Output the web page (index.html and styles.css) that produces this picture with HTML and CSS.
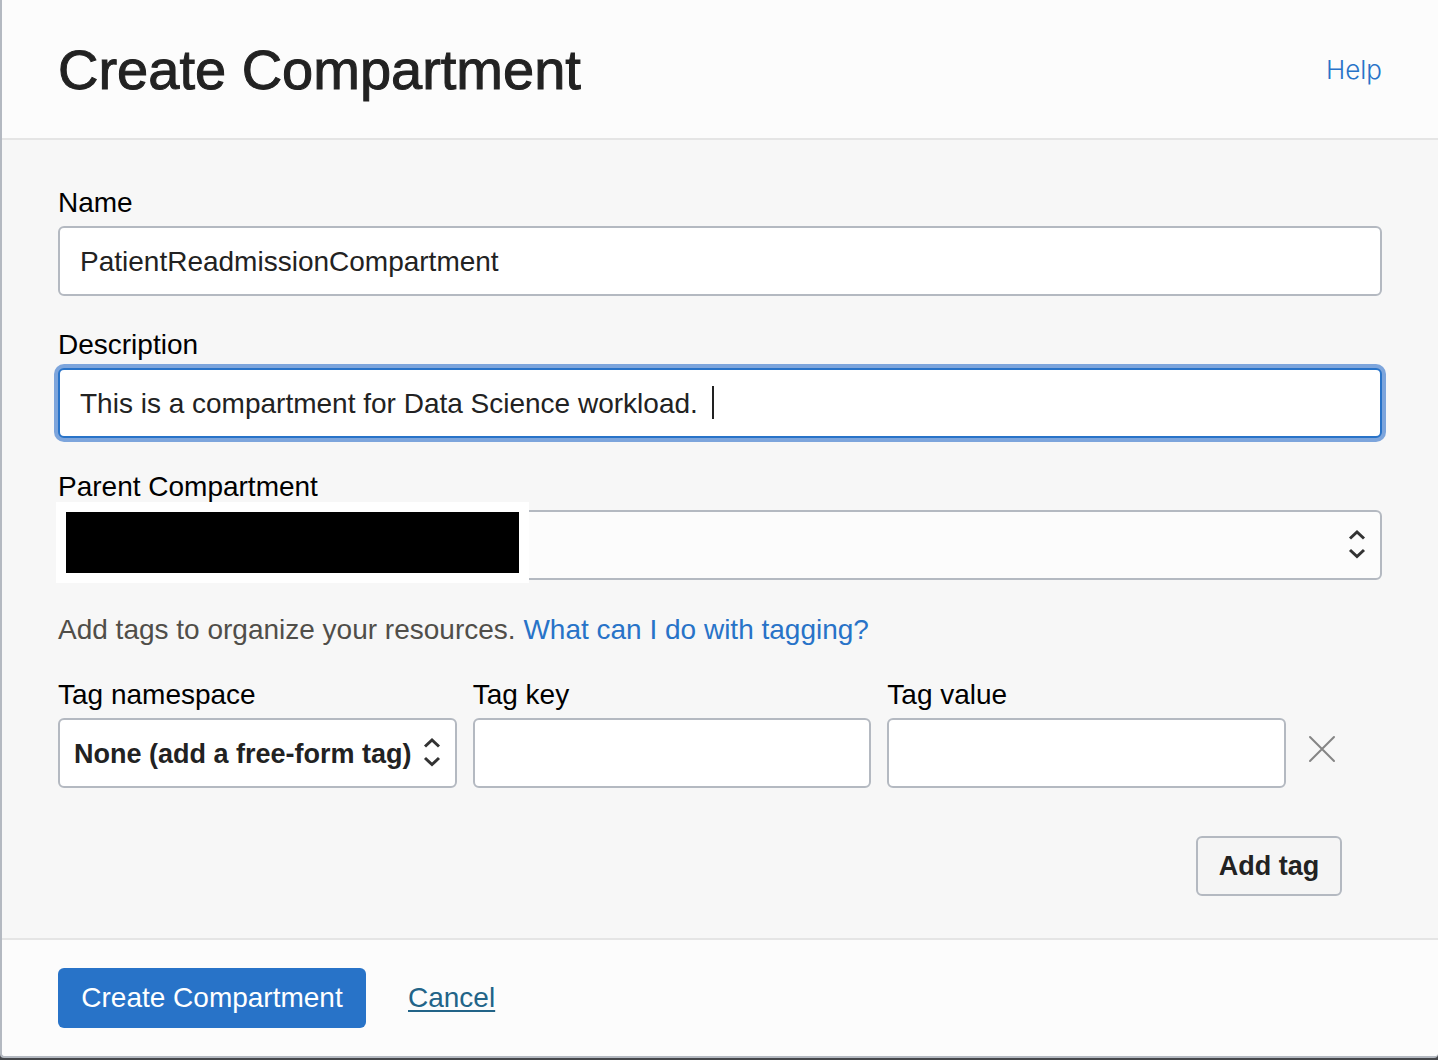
FILE: index.html
```html
<!DOCTYPE html>
<html lang="en">
<head>
<meta charset="utf-8">
<meta name="viewport" content="width=device-width, initial-scale=1">
<title>Create Compartment</title>
<link rel="stylesheet" href="styles.css">
</head>
<body>
<form class="dialog">
  <header class="dialog-header">
    <h1 class="title">Create Compartment</h1>
    <a class="help" href="#help">Help</a>
  </header>

  <main class="dialog-body">
    <div class="field">
      <label for="name">Name</label>
      <input class="control" id="name" type="text" value="PatientReadmissionCompartment">
    </div>
    <div class="field">
      <label for="description">Description</label>
      <div class="control-wrap">
        <input class="control control-active" id="description" type="text" value="This is a compartment for Data Science workload. ">
        <span class="caret"></span>
      </div>
    </div>
    <div class="field">
      <label for="parent">Parent Compartment</label>
      <div class="control-wrap">
        <select class="control control-muted" id="parent"><option value=""></option></select>
        <svg class="arrows" viewBox="0 0 20 32" aria-hidden="true"><path d="M3 10.5 10 4l7 6.500M3 22l7 6.500 7-6.500"/></svg>
        <span class="redaction"></span>
      </div>
    </div>

    <p class="hint">Add tags to organize your resources. <a class="hint-link" href="#tagging">What can I do with tagging?</a></p>

    <div class="tags">
      <div class="tag-row">
        <div class="tag-field">
          <label for="namespace">Tag namespace</label>
          <div class="control-wrap">
            <select class="control control-strong" id="namespace"><option>None (add a free-form tag)</option></select>
            <svg class="arrows" viewBox="0 0 20 32" aria-hidden="true"><path d="M3 10.5 10 4l7 6.500M3 22l7 6.500 7-6.500"/></svg>
          </div>
        </div>
        <div class="tag-field">
          <label for="key">Tag key</label>
          <input class="control" id="key" type="text">
        </div>
        <div class="tag-field">
          <label for="value">Tag value</label>
          <input class="control" id="value" type="text">
        </div>
        <button class="remove" type="button" aria-label="Remove tag">
          <svg class="remove-icon" viewBox="0 0 28 28" aria-hidden="true"><path d="M2 2l24 24M26 2 2 26"/></svg>
        </button>
      </div>
      <button class="add-tag" type="button">Add tag</button>
    </div>
  </main>

  <footer class="dialog-footer">
    <button class="submit" type="button">Create Compartment</button>
    <a class="cancel" href="#cancel">Cancel</a>
  </footer>
</form>
</body>
</html>
```
FILE: styles.css
```css
* {
  box-sizing: border-box;
}

body {
  margin: 0;
  padding-bottom: 2px;
  background: #45474b;
  color: #222;
  font: 28px/32px "Liberation Sans", Arial, sans-serif;
}

.dialog {
  overflow: hidden;
  border: solid #b4b9c1;
  border-width: 0 0 2px 2px;
  border-radius: 0 0 4px 4px;
  background: #fcfcfc;
}

.dialog-header {
  display: flex;
  align-items: center;
  justify-content: space-between;
  padding: 38px 56px 36px;
  border-bottom: 2px solid #e5e5e5;
}

.title {
  margin: 0;
  font-size: 56px;
  font-weight: 400;
  line-height: 64px;
  -webkit-text-stroke: 1px #222;
}

.help {
  color: #2873c8;
  font-family: Inter, "Liberation Sans", sans-serif;
  font-size: 26px;
  font-weight: 300;
  text-decoration: none;
}

.dialog-body {
  padding: 46px 56px 42px;
  background: #f7f7f7;
}

.field,
.tag-field {
  display: flex;
  flex-direction: column;
  gap: 6px;
  min-width: 0;
  color: #000;
  line-height: 34px;
}

.field {
  margin-bottom: 32px;
}

.control {
  display: block;
  width: 100%;
  height: 70px;
  margin: 0;
  padding: 2px 20px 0;
  border: 2px solid #b4b9c1;
  border-radius: 6px;
  outline: 0;
  background: #fff;
  color: #222;
  font: inherit;
  appearance: none;
}

.control-wrap {
  position: relative;
}

.control-active {
  border-color: #2873c8;
  box-shadow: 0 0 0 4px #7da5dc;
}

.control-muted {
  background: #fcfcfc;
}

.control-strong {
  padding: 2px 40px 0 14px;
  font-size: 27px;
  font-weight: 700;
}

.caret {
  position: absolute;
  top: 18px;
  left: 654px;
  width: 2px;
  height: 33px;
  background: #222;
}

.arrows {
  position: absolute;
  top: 18px;
  right: 15px;
  width: 20px;
  height: 32px;
  fill: none;
  stroke: #333;
  stroke-width: 3;
  pointer-events: none;
}

.redaction {
  position: absolute;
  top: -8px;
  left: -2px;
  width: 473px;
  height: 81px;
  border: 10px solid #fff;
  background: #000;
}

.hint {
  margin: 34px 0 32px;
  color: #504e49;
}

.hint-link {
  color: #2873c8;
  text-decoration: none;
}

.tags {
  display: flex;
  flex-direction: column;
  gap: 48px;
  padding-right: 40px;
}

.tag-row {
  display: grid;
  grid-template-columns: repeat(3, minmax(0, 1fr)) 40px;
  column-gap: 16px;
}

.remove {
  display: flex;
  align-self: end;
  align-items: center;
  justify-content: center;
  height: 78px;
  padding: 0;
  border: 0;
  background: none;
}

.remove-icon {
  width: 28px;
  height: 28px;
  fill: none;
  stroke: #858585;
  stroke-width: 2;
  stroke-linecap: round;
}

.add-tag {
  align-self: flex-end;
  width: 146px;
  height: 60px;
  padding: 0;
  border: 2px solid #b4b9c1;
  border-radius: 6px;
  background: #f5f5f5;
  color: #222;
  font: inherit;
  font-size: 27px;
  font-weight: 700;
}

.dialog-footer {
  display: flex;
  align-items: center;
  gap: 42px;
  padding: 28px 56px;
  border-top: 2px solid #e5e5e5;
}

.submit {
  width: 308px;
  height: 60px;
  padding: 0;
  border: 0;
  border-radius: 6px;
  background: #2873c8;
  color: #fff;
  font: inherit;
}

.cancel {
  color: #226488;
  text-decoration-thickness: 2px;
  text-underline-offset: 3px;
}
```
